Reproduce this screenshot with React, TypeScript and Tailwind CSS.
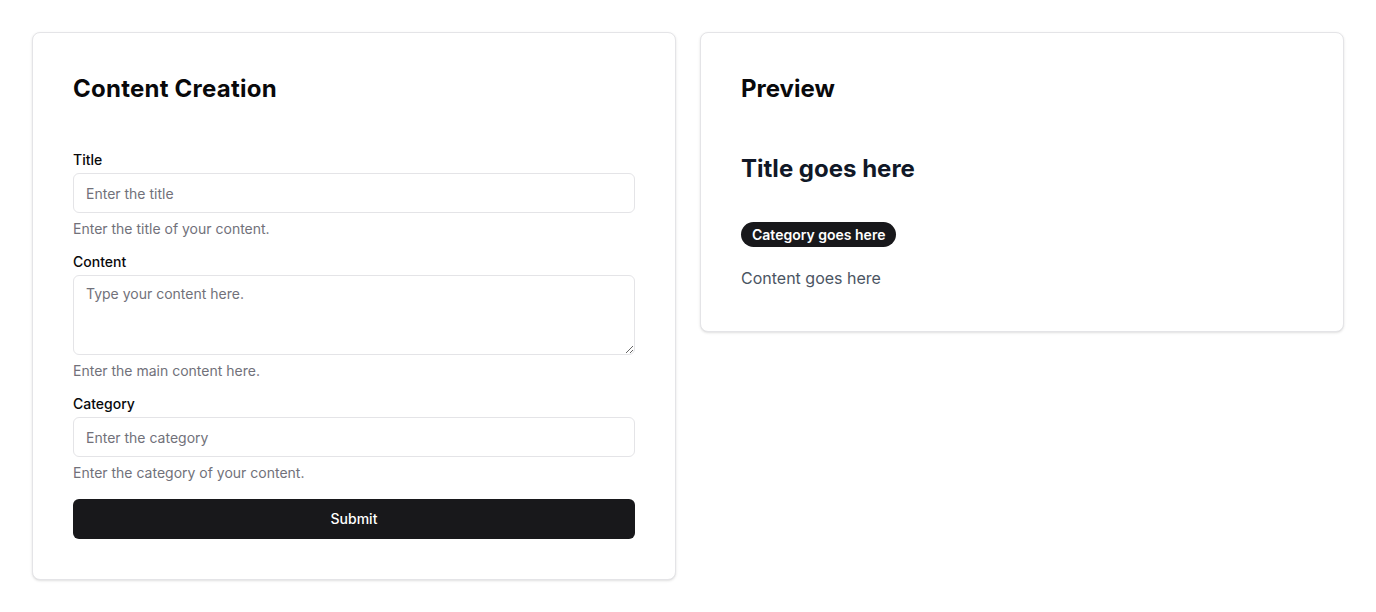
import { useState } from "react";

export default function App() {
  const [title, setTitle] = useState("");
  const [content, setContent] = useState("");
  const [category, setCategory] = useState("");

  return (
    <main
      className="min-h-screen bg-white p-8 text-[#09090b]"
      style={{ fontFamily: "Inter, 'Noto Sans', sans-serif" }}
    >
      <div className="grid grid-cols-2 gap-6 items-start">
        <section className="rounded-lg border border-[#e4e4e7] bg-white p-10 shadow-sm">
          <h1 className="text-2xl leading-8 font-bold tracking-[0.01em]">Content Creation</h1>

          <form className="mt-[45px] flex flex-col" onSubmit={(e) => e.preventDefault()}>
            <label className="text-sm leading-5 font-medium">Title</label>
            <input
              value={title}
              onChange={(e) => setTitle(e.target.value)}
              placeholder="Enter the title"
              className="mt-[3px] h-10 w-full rounded-md border border-[#e4e4e7] bg-white px-3 py-2 text-sm placeholder:text-[#71717a] outline-none"
            />
            <p className="mt-[6px] text-sm leading-5 text-[#71717a]">
              Enter the title of your content.
            </p>

            <label className="mt-[13px] text-sm leading-5 font-medium">Content</label>
            <textarea
              value={content}
              onChange={(e) => setContent(e.target.value)}
              placeholder="Type your content here."
              className="mt-[3px] h-20 w-full rounded-md border border-[#e4e4e7] bg-white px-3 py-2 text-sm leading-5 placeholder:text-[#71717a] outline-none"
            />
            <p className="mt-[6px] text-sm leading-5 text-[#71717a]">
              Enter the main content here.
            </p>

            <label className="mt-[13px] text-sm leading-5 font-medium">Category</label>
            <input
              value={category}
              onChange={(e) => setCategory(e.target.value)}
              placeholder="Enter the category"
              className="mt-[3px] h-10 w-full rounded-md border border-[#e4e4e7] bg-white px-3 py-2 text-sm placeholder:text-[#71717a] outline-none"
            />
            <p className="mt-[6px] text-sm leading-5 text-[#71717a]">
              Enter the category of your content.
            </p>

            <button
              type="submit"
              className="mt-[16px] h-10 w-full rounded-md bg-[#18181b] text-sm font-medium text-white"
            >
              Submit
            </button>
          </form>
        </section>

        <section className="rounded-lg border border-[#e4e4e7] bg-white px-10 pt-10 pb-[41px] shadow-sm">
          <h2 className="text-2xl leading-8 font-bold">Preview</h2>
          <h3 className="mt-[48px] text-2xl leading-8 font-bold text-[#111827]">
            {title || "Title goes here"}
          </h3>
          <span className="mt-[37px] inline-flex h-[25px] items-center rounded-full bg-[#18181b] px-[11px] text-sm font-semibold text-white">
            {category || "Category goes here"}
          </span>
          <p className="mt-[19px] text-base leading-6 text-[#4b5563]">
            {content || "Content goes here"}
          </p>
        </section>
      </div>
    </main>
  );
}
